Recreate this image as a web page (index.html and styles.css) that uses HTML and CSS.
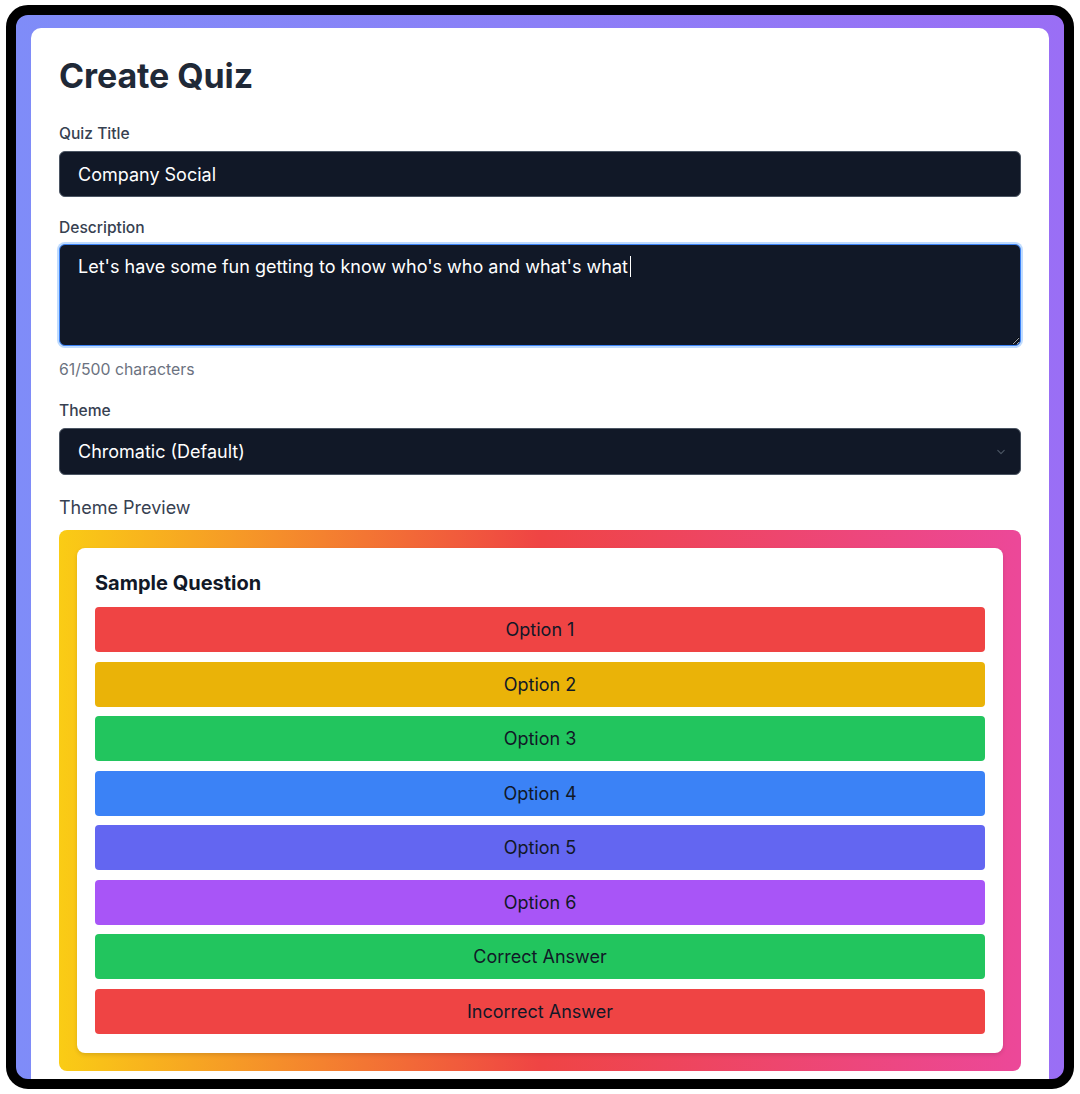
FILE: index.html
```html
<!DOCTYPE html>
<html lang="en">
<head>
<meta charset="utf-8">
<title>Create Quiz</title>
<link rel="stylesheet" href="styles.css">
</head>
<body>
<div class="frame">
  <main class="card">
    <h1 class="title">Create Quiz</h1>

    <label class="label" for="quiz-title">Quiz Title</label>
    <input id="quiz-title" class="field" type="text" value="Company Social">

    <label class="label label-gap" for="quiz-desc">Description</label>
    <div class="textarea-wrap">
      <div id="quiz-desc" class="field textarea">Let's have some fun getting to know who's who and what's what<span class="caret"></span></div>
    </div>
    <div class="counter">61/500 characters</div>

    <label class="label label-gap2">Theme</label>
    <div class="field select">
      <span>Chromatic (Default)</span>
      <svg class="chevron" width="16" height="16" viewBox="0 0 20 20" fill="none" stroke="#4b5563" stroke-width="1.5" stroke-linecap="round" stroke-linejoin="round"><path d="M6 8l4 4 4-4"/></svg>
    </div>

    <div class="preview-label">Theme Preview</div>
    <div class="preview">
      <div class="preview-card">
        <h2 class="question">Sample Question</h2>
        <div class="options">
          <div class="option red">Option 1</div>
          <div class="option yellow">Option 2</div>
          <div class="option green">Option 3</div>
          <div class="option blue">Option 4</div>
          <div class="option indigo">Option 5</div>
          <div class="option purple">Option 6</div>
          <div class="option green">Correct Answer</div>
          <div class="option red">Incorrect Answer</div>
        </div>
      </div>
    </div>
  </main>
</div>
</body>
</html>
```

FILE: styles.css
```css
* { box-sizing: border-box; }

html, body {
  margin: 0;
  padding: 0;
  background: #ffffff;
}

body {
  padding: 5px 6px 5px 6px;
  font-family: Inter, "Noto Sans", "Liberation Sans", sans-serif;
  color: #1f2937;
}

.frame {
  height: 1084px;
  border: 10px solid #000;
  border-radius: 22px;
  background: linear-gradient(90deg, #7f8cf8 0%, #8b7ff7 50%, #9a6ef5 100%);
  padding: 13px 15px 0 15px;
  overflow: hidden;
}

.card {
  background: #ffffff;
  border-radius: 10px;
  padding: 28px 28px 40px 28px;
  min-height: 1200px;
  display: flex;
  flex-direction: column;
}

.title {
  margin: 0;
  font-size: 34px;
  line-height: 40px;
  font-weight: 700;
  color: #1f2937;
  letter-spacing: -0.1px;
}

.label {
  display: block;
  font-size: 15.6px;
  line-height: 22px;
  font-weight: 500;
  color: #374151;
  margin-top: 27px;
  margin-bottom: 6px;
}

.label-gap { margin-top: 20px; margin-bottom: 5px; }
.label-gap2 { margin-top: 20px; margin-bottom: 6px; }

.field {
  display: block;
  width: 100%;
  background: #111827;
  border: 1px solid #4b5563;
  border-radius: 6px;
  color: #ffffff;
  font-family: Inter, "Noto Sans", "Liberation Sans", sans-serif;
  font-size: 18px;
  line-height: 28px;
  padding: 8px 18px;
  height: 46px;
  outline: none;
}

.textarea-wrap {
  border-radius: 8px;
}

.textarea {
  height: 102px;
  border: 1px solid #3b82f6;
  box-shadow: 0 0 0 2px #bfdbfe;
  resize: vertical;
  overflow: auto;
  white-space: pre-wrap;
}

.caret {
  display: inline-block;
  width: 1px;
  height: 21px;
  background: #ffffff;
  vertical-align: -4px;
  margin-left: 2px;
}

.counter {
  margin-top: 14px;
  font-size: 15.8px;
  line-height: 20px;
  color: #6b7280;
}

.select {
  height: 47px;
  display: flex;
  align-items: center;
  justify-content: space-between;
  padding-right: 11px;
}

.chevron { flex: none; }

.preview-label {
  margin-top: 21px;
  font-size: 18px;
  line-height: 24px;
  color: #374151;
}

.preview {
  margin-top: 10px;
  border-radius: 8px;
  padding: 18px;
  background: linear-gradient(90deg, #facc15 0%, #ef4444 50%, #ec4899 100%);
}

.preview-card {
  background: #ffffff;
  border-radius: 8px;
  padding: 21px 18px 19px 18px;
  box-shadow: 0 2px 4px rgba(0, 0, 0, 0.12);
}

.question {
  margin: 0 0 10px 0;
  font-size: 20px;
  line-height: 28px;
  font-weight: 700;
  color: #111827;
}

.options {
  display: flex;
  flex-direction: column;
  gap: 9.5px;
}

.option {
  height: 45px;
  border-radius: 4px;
  display: flex;
  align-items: center;
  justify-content: center;
  font-size: 18px;
  color: #111827;
}

.red { background: #ef4444; }
.yellow { background: #eab308; }
.green { background: #22c55e; }
.blue { background: #3b82f6; }
.indigo { background: #6366f1; }
.purple { background: #a855f7; }
```
